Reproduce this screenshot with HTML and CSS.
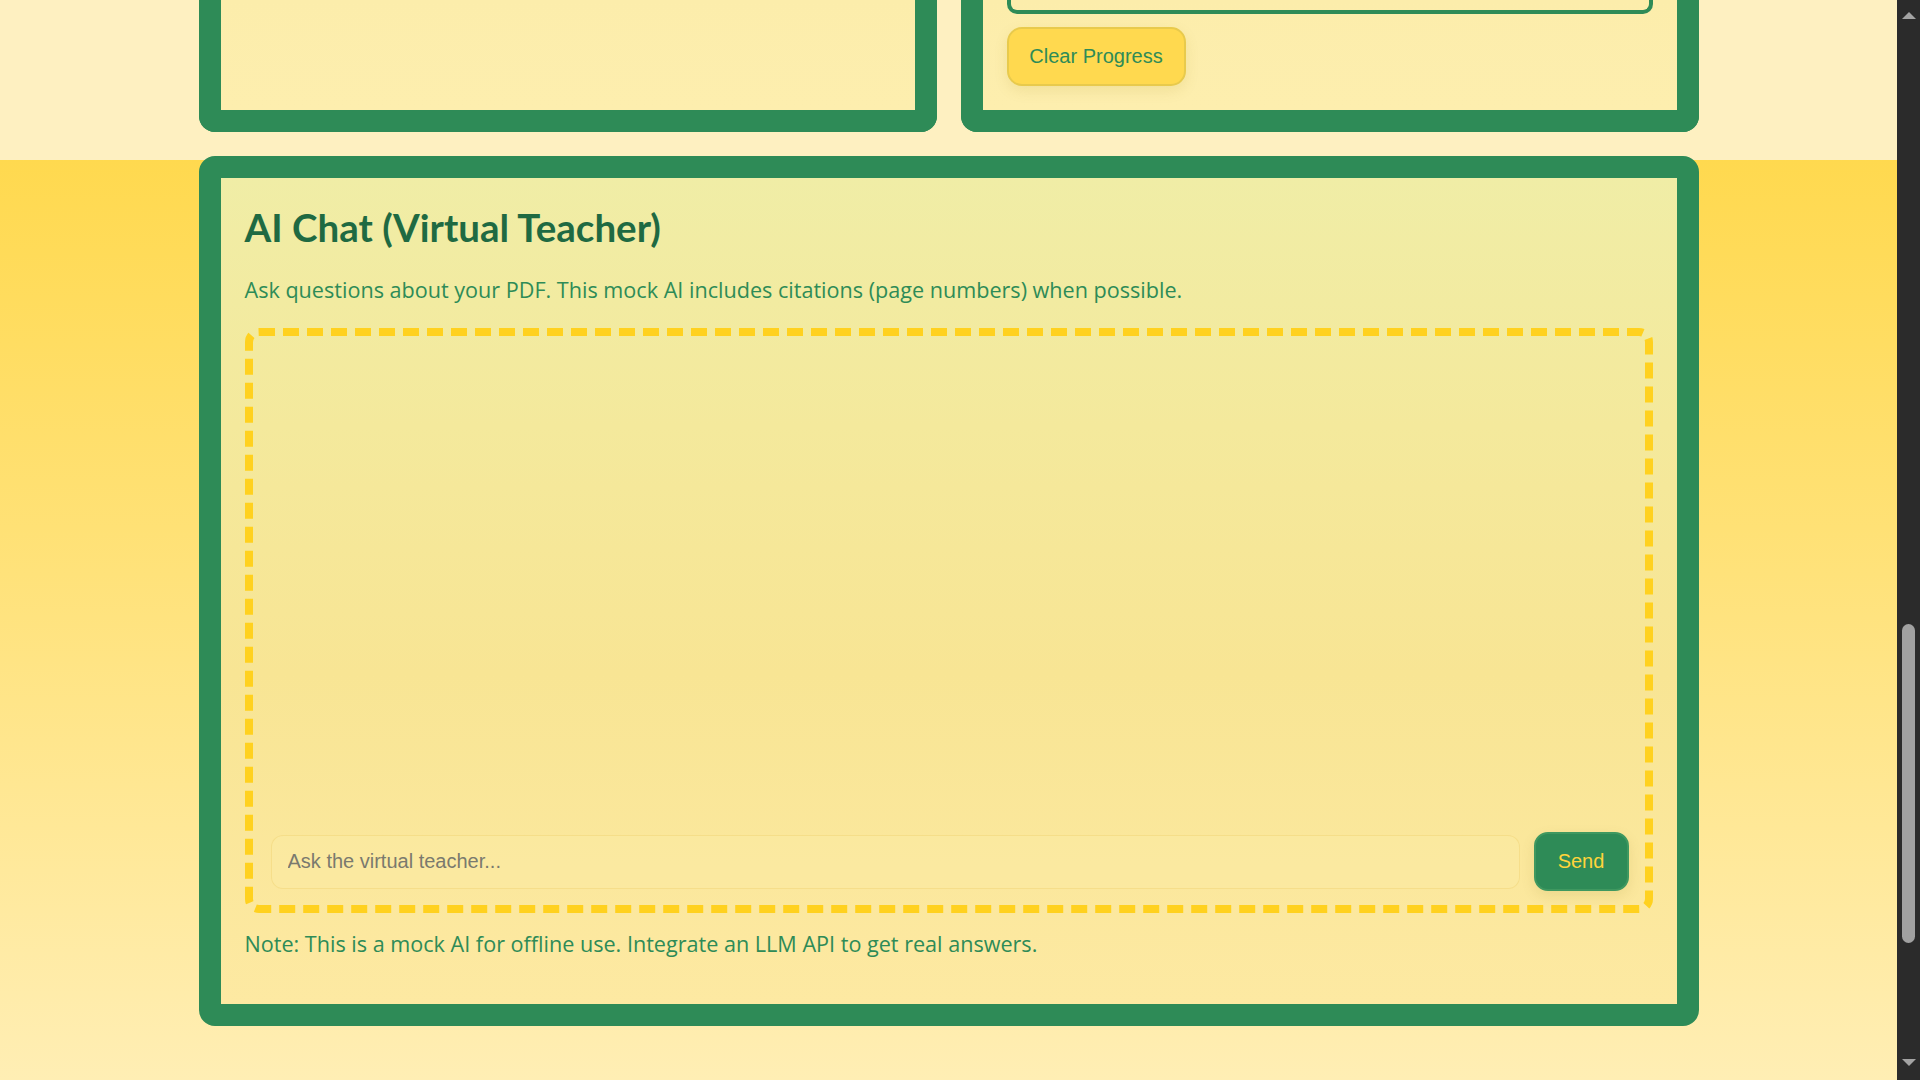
FILE: index.html
```html
<!DOCTYPE html>
<html lang="en">
<head>
<meta charset="utf-8">
<title>AI Chat (Virtual Teacher)</title>
<link rel="stylesheet" href="styles.css">
</head>
<body>
<div class="viewport">
  <main class="page">
    <section class="top-band">
      <div class="container top-grid">
        <div class="card card-cut"></div>
        <div class="card card-cut card-pad">
          <div class="progress-box"></div>
          <button class="btn-yellow" type="button">Clear Progress</button>
        </div>
      </div>
    </section>
    <section class="chat-band">
      <div class="container">
        <div class="card chat-card">
          <h2 class="chat-title">AI Chat (Virtual Teacher)</h2>
          <p class="chat-sub">Ask questions about your PDF. This mock AI includes citations (page numbers) when possible.</p>
          <div class="chat-box">
            <div class="chat-log"></div>
            <div class="chat-input-row">
              <input class="chat-input" type="text" placeholder="Ask the virtual teacher...">
              <button class="btn-green" type="button">Send</button>
            </div>
          </div>
          <p class="chat-note">Note: This is a mock AI for offline use. Integrate an LLM API to get real answers.</p>
        </div>
      </div>
    </section>
  </main>
  <div class="scrollbar" aria-hidden="true">
    <div class="sb-arrow sb-up"></div>
    <div class="sb-track"><div class="sb-thumb"></div></div>
    <div class="sb-arrow sb-down"></div>
  </div>
</div>
</body>
</html>
```
FILE: styles.css
```css
html, body {
  margin: 0;
  padding: 0;
  height: 1080px;
  overflow: hidden;
}

body {
  font-family: "Open Sans", "Noto Sans", sans-serif;
  color: #2e8b57;
}

.viewport {
  display: flex;
  height: 1080px;
}

.page {
  flex: 1;
  display: flex;
  flex-direction: column;
  overflow: hidden;
  min-width: 0;
}

.container {
  width: 1500px;
  margin: 0 auto;
  box-sizing: border-box;
}

/* ---------- top band (scrolled, only bottoms visible) ---------- */
.top-band {
  background: #fef0c1;
  padding-bottom: 28px;
}

.top-grid {
  display: grid;
  grid-template-columns: 1fr 1fr;
  gap: 24px;
}

.card {
  border: 22px solid #2e8b57;
  border-radius: 16px;
  box-sizing: border-box;
}

.card-cut {
  border-top: none;
  border-radius: 0 0 16px 16px;
  height: 132px;
  background: linear-gradient(180deg, #fcedab 0%, #fdeeae 100%);
}

.card-pad {
  padding: 0 24px 24px;
  display: flex;
  flex-direction: column;
  align-items: flex-start;
}

.progress-box {
  align-self: stretch;
  height: 14px;
  box-sizing: border-box;
  border: 4px solid #2e8b57;
  border-top: none;
  border-radius: 0 0 10px 10px;
}

.btn-yellow {
  margin-top: 13px;
  width: 179px;
  height: 59px;
  background: #ffd94f;
  border: 2px solid #e8ca4c;
  border-radius: 15px;
  color: #2e8b57;
  font-family: "Liberation Sans", Arial, sans-serif;
  font-size: 20px;
  box-shadow: 0 5px 14px rgba(160, 130, 0, 0.12);
  padding: 0;
}

/* ---------- chat band ---------- */
.chat-band {
  flex: 1;
  background: linear-gradient(180deg, #ffd94f 0%, #ffe27a 45%, #ffeeb4 100%);
}

.chat-card {
  margin-top: -4px;
  padding: 25px 24px 45px;
  background: linear-gradient(180deg, #f0eda6 0%, #f4e99c 30%, #f8e594 60%, #fde9a2 100%);
}

.chat-title {
  margin: 3px 0 0;
  font-family: "Lato", "Open Sans", sans-serif;
  font-size: 38.5px;
  line-height: 42px;
  font-weight: 700;
  color: #1f6a42;
}

.chat-sub,
.chat-note {
  font-size: 21.6px;
  line-height: 28.5px;
  margin: 0;
  color: #2e8b57;
}

.chat-sub {
  margin-top: 28px;
}

.chat-box {
  margin-top: 23.5px;
  height: 585px;
  box-sizing: border-box;
  border: 8px dashed #ffd11f;
  border-radius: 14px;
  padding: 16px 16px 14px 18px;
  display: flex;
  flex-direction: column;
}

.chat-log {
  flex: 1;
}

.chat-input-row {
  display: flex;
  align-items: center;
  gap: 14px;
}

.chat-input {
  flex: 1;
  height: 54px;
  box-sizing: border-box;
  border: 1px solid rgba(240, 214, 120, 0.55);
  border-radius: 12px;
  background: rgba(255, 245, 190, 0.12);
  padding: 0 16px;
  font-family: "Liberation Sans", Arial, sans-serif;
  font-size: 20px;
  color: #333;
  outline: none;
}

.chat-input::placeholder {
  color: #7a7a6e;
}

.btn-green {
  width: 95px;
  height: 59px;
  background: #2e8b57;
  border: 2px solid #3f9860;
  border-radius: 14px;
  color: #ffd43b;
  font-family: "Liberation Sans", Arial, sans-serif;
  font-size: 20px;
  padding: 0;
  box-shadow: 0 5px 14px rgba(120, 110, 20, 0.12);
}

.chat-note {
  margin-top: 17px;
}

/* ---------- scrollbar ---------- */
.scrollbar {
  width: 23px;
  background: #2b2b2b;
  display: flex;
  flex-direction: column;
  align-items: center;
  padding: 12px 0 14px;
  box-sizing: border-box;
}

.sb-arrow {
  width: 0;
  height: 0;
  border-left: 7px solid transparent;
  border-right: 7px solid transparent;
}

.sb-up {
  border-bottom: 7px solid #a3a3a3;
}

.sb-down {
  border-top: 7px solid #a3a3a3;
}

.sb-track {
  flex: 1;
  align-self: stretch;
  display: flex;
  flex-direction: column;
  align-items: center;
  padding-top: 605px;
}

.sb-thumb {
  width: 13px;
  height: 319px;
  border-radius: 7px;
  background: #a1a1a1;
}
```
